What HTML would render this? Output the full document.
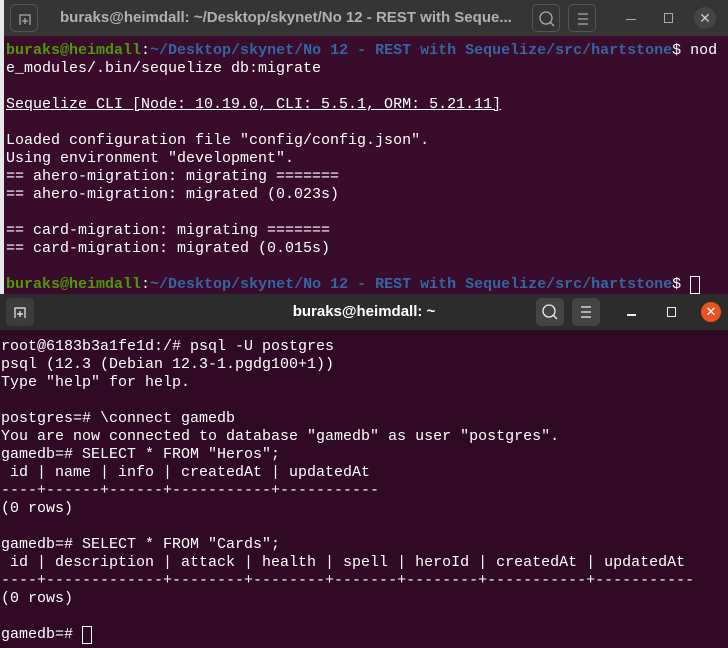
<!DOCTYPE html>
<html><head><style>
*{margin:0;padding:0;box-sizing:border-box}
body{width:728px;height:648px;overflow:hidden;background:#e8e8e8;position:relative;font-family:"Liberation Mono",monospace}
.win{position:absolute;overflow:hidden}
.tb{position:absolute;left:0;right:0;top:0;height:36px}
.btn{position:absolute;top:4px;width:28px;height:28px;border-radius:5px}
.term{position:absolute;left:0;right:0;font-size:15px;line-height:18px;white-space:pre;color:#fff}
.g{color:#4e9a06;font-weight:bold}.b{color:#3465a4;font-weight:bold}
.title{position:absolute;top:0;height:36px;line-height:36px;font-family:"Liberation Sans",sans-serif;font-weight:bold;font-size:15px}
.cur{display:inline-block;width:10px;height:18px;border:1px solid #fff;vertical-align:top}
</style></head><body>
<div class="win" style="left:4px;top:0;width:724px;height:294px;background:#380c2a">
 <div class="tb" style="background:#353535">
  <div class="btn" style="left:6px;border:1px solid #555;background:#353535"><svg width="28" height="28"><path d="M9 20V10h10v10M14 13v6M11 16h6" stroke="#aaa" fill="none" stroke-width="1.2"/></svg></div>
  <div class="title" style="left:56px;color:#b0b0b0">buraks@heimdall: ~/Desktop/skynet/No 12 - REST with Seque...</div>
  <div class="btn" style="left:528px;border:1px solid #555;background:#353535"><svg width="28" height="28"><circle cx="13" cy="13" r="6" stroke="#aaa" fill="none" stroke-width="1.3"/><path d="M17 17l4 4" stroke="#aaa" stroke-width="1.3"/></svg></div>
  <div class="btn" style="left:564px;border:1px solid #555;background:#353535"><svg width="28" height="28"><path d="M9 9h10M9 14h10M9 19h10" stroke="#aaa" stroke-width="1.2"/></svg></div>
  <div style="position:absolute;left:622px;top:19px;width:10px;height:1px;background:#aaa"></div>
  <div style="position:absolute;left:660px;top:13px;width:9px;height:10px;border:1px solid #aaa"></div>
  <div style="position:absolute;left:690px;top:7px;width:22px;height:22px;border-radius:50%;background:#454545;color:#ccc;font:14px/22px 'Liberation Sans',sans-serif;text-align:center">✕</div>
 </div>
 <div class="term" style="top:42px;left:2px"><span class="g">buraks@heimdall</span>:<span class="b">~/Desktop/skynet/No 12 - REST with Sequelize/src/hartstone</span>$ nod
e_modules/.bin/sequelize db:migrate

<u>Sequelize CLI [Node: 10.19.0, CLI: 5.5.1, ORM: 5.21.11]</u>

Loaded configuration file "config/config.json".
Using environment "development".
== ahero-migration: migrating =======
== ahero-migration: migrated (0.023s)

== card-migration: migrating =======
== card-migration: migrated (0.015s)

<span class="g">buraks@heimdall</span>:<span class="b">~/Desktop/skynet/No 12 - REST with Sequelize/src/hartstone</span>$ <span class="cur"></span></div>
</div>
<div class="win" style="left:0;top:294px;width:728px;height:354px;background:#300a24">
 <div class="tb" style="background:#2c2c2c">
  <div class="btn" style="left:6px;background:#3c3c3c"><svg width="28" height="28"><path d="M9 20V10h10v10M14 13v6M11 16h6" stroke="#eee" fill="none" stroke-width="1.2"/></svg></div>
  <div class="title" style="left:0;right:0;text-align:center;color:#fff">buraks@heimdall: ~</div>
  <div class="btn" style="left:536px;background:#444"><svg width="28" height="28"><circle cx="13" cy="13" r="6" stroke="#eee" fill="none" stroke-width="1.3"/><path d="M17 17l4 4" stroke="#eee" stroke-width="1.3"/></svg></div>
  <div class="btn" style="left:572px;background:#444"><svg width="28" height="28"><path d="M9 9h10M9 14h10M9 19h10" stroke="#eee" stroke-width="1.2"/></svg></div>
  <div style="position:absolute;left:627px;top:20px;width:9px;height:1.5px;background:#eee"></div>
  <div style="position:absolute;left:667px;top:13px;width:9px;height:10px;border:1.5px solid #eee"></div>
  <div style="position:absolute;left:701px;top:8px;width:20px;height:20px;border-radius:50%;background:#e95420;color:#fff;font:13px/20px 'Liberation Sans',sans-serif;text-align:center">✕</div>
 </div>
 <div class="term" style="top:44px;left:1px">root@6183b3a1fe1d:/# psql -U postgres
psql (12.3 (Debian 12.3-1.pgdg100+1))
Type "help" for help.

postgres=# \connect gamedb
You are now connected to database "gamedb" as user "postgres".
gamedb=# SELECT * FROM "Heros";
 id | name | info | createdAt | updatedAt
----+------+------+-----------+-----------
(0 rows)

gamedb=# SELECT * FROM "Cards";
 id | description | attack | health | spell | heroId | createdAt | updatedAt
----+-------------+--------+--------+-------+--------+-----------+-----------
(0 rows)

gamedb=# <span class="cur"></span></div>
</div>
</body></html>
